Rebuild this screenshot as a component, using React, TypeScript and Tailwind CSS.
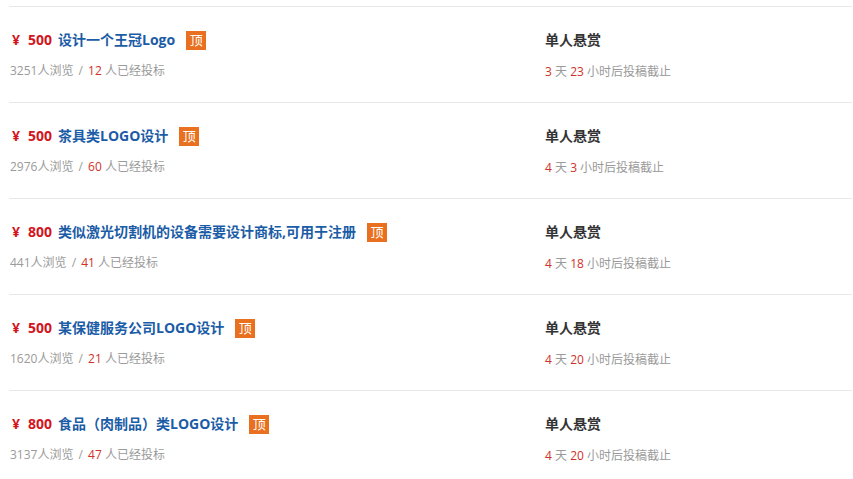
const tasks = [
  { price: 500, title: "设计一个王冠Logo", views: 3251, bids: 12, days: 3, hours: 23 },
  { price: 500, title: "茶具类LOGO设计", views: 2976, bids: 60, days: 4, hours: 3 },
  { price: 800, title: "类似激光切割机的设备需要设计商标,可用于注册", views: 441, bids: 41, days: 4, hours: 18 },
  { price: 500, title: "某保健服务公司LOGO设计", views: 1620, bids: 21, days: 4, hours: 20 },
  { price: 800, title: "食品（肉制品）类LOGO设计", views: 3137, bids: 47, days: 4, hours: 20 },
];

const App = () => (
  <div
    className="w-[853px] h-[479px] overflow-hidden bg-white pt-[6px] pl-[9px] pr-px"
    style={{ fontFamily: '"Open Sans", "Noto Sans CJK SC", sans-serif' }}
  >
    {tasks.map((t) => (
      <div key={t.title} className="flex h-[96px] border-t border-[#e8e8e8] pt-[23px]">
        <div className="w-[536px] pl-[3px]">
          <div className="flex items-center h-[20px] text-[14px] font-bold leading-[20px]">
            <span className="text-[#d4141c]">¥</span>
            <span className="ml-[8px] text-[#d4141c]">{t.price}</span>
            <span className="ml-[6px] text-[#1b5ca6]">{t.title}</span>
            <span className="ml-[11px] flex h-[19px] w-[20px] items-center justify-center bg-[#e8701e] text-[13px] font-normal text-white">
              顶
            </span>
          </div>
          <div className="mt-[12px] -ml-[2px] text-[12px] leading-[18px] text-[#9a9a9a]">
            {t.views}人浏览 <span className="mx-[2px]">/</span> <span className="text-[#d0322a]">{t.bids}</span> 人已经投标
          </div>
        </div>
        <div>
          <div className="h-[20px] text-[14px] font-bold leading-[20px] text-[#333]">单人悬赏</div>
          <div className="mt-[13px] text-[12px] leading-[18px] text-[#9a9a9a]">
            <span className="text-[#d0322a]">{t.days}</span> 天{" "}
            <span className="text-[#d0322a]">{t.hours}</span> 小时后投稿截止
          </div>
        </div>
      </div>
    ))}
  </div>
);

export default App;
